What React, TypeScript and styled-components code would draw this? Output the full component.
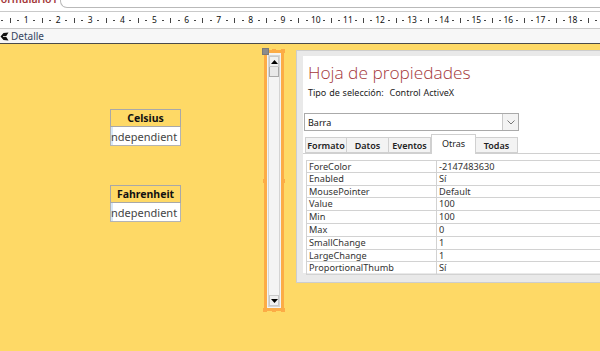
import React from "react";
import styled, { createGlobalStyle } from "styled-components";

const Global = createGlobalStyle`
  html, body { margin: 0; padding: 0; background: #ffffff; }
  body { font-family: "Noto Sans", "Open Sans", sans-serif; overflow: hidden; }
  * { box-sizing: border-box; }
`;

const Page = styled.div`
  width: 600px;
  height: 351px;
  display: flex;
  flex-direction: column;
  overflow: hidden;
`;

/* ---------- top document tab strip ---------- */
const TabStrip = styled.div`
  height: 11px;
  display: flex;
  background: #ffffff;
`;
const DocTab = styled.div`
  width: 60px;
  overflow: hidden;
`;
const DocTabTitle = styled.span`
  display: block;
  margin-top: -7px;
  margin-left: -5px;
  font-size: 10.5px;
  line-height: 12px;
  font-weight: 600;
  color: #a4373a;
  white-space: nowrap;
`;
const TabRest = styled.div`
  flex: 1;
  height: 8px;
  border-left: 1px solid #b9b9b9;
  border-bottom: 1px solid #b9b9b9;
  border-bottom-left-radius: 7px;
`;

/* ---------- ruler ---------- */
const Ruler = styled.div`
  height: 18px;
  border-top: 1px solid #c9c9c9;
  border-bottom: 1px solid #c9c9c9;
  background: #ffffff;
  display: flex;
  align-items: center;
  overflow: hidden;
`;
const RulerTrack = styled.div`
  display: flex;
  margin-left: -10px;
`;
const RulerUnit = styled.div`
  width: 32.1px;
  flex: none;
  display: grid;
  grid-template-columns: repeat(4, 1fr);
  align-items: center;
  justify-items: center;
  height: 16px;
`;
const RulerNum = styled.span`
  font-size: 8.5px;
  line-height: 10px;
  color: #111;
`;
const RulerDot = styled.span`
  width: 2px;
  height: 1px;
  background: #444;
`;
const RulerTick = styled.span`
  width: 1px;
  height: 5px;
  background: #444;
`;

/* ---------- section bar ---------- */
const SectionBar = styled.div`
  height: 15px;
  background: #f7f7f7;
  border-bottom: 1px solid #4a4a4a;
  display: flex;
  align-items: center;
  gap: 2px;
`;
const SectionLabel = styled.span`
  font-size: 10px;
  line-height: 12px;
  color: #354562;
`;

/* ---------- form canvas ---------- */
const FormCanvas = styled.div`
  flex: 1;
  background: #fed966;
  position: relative;
`;

const FieldGroup = styled.div<{ $top: number }>`
  position: absolute;
  left: 110px;
  top: ${(p) => p.$top}px;
  width: 71px;
  display: flex;
  flex-direction: column;
`;
const FieldLabel = styled.div`
  height: 18px;
  border: 1px solid #a8a8a8;
  display: flex;
  align-items: center;
  justify-content: center;
  font-size: 10.5px;
  font-weight: 700;
  color: #111;
`;
const FieldBox = styled.div`
  height: 19px;
  border: 1px solid #b4b4b4;
  border-top: none;
  background: #ffffff;
  display: flex;
  align-items: center;
  overflow: hidden;
  white-space: nowrap;
  font-size: 11px;
  color: #444;
  box-shadow: inset 2px 0 0 #d6e7f7;
`;

/* ---------- scrollbar control ---------- */
const ScrollSelection = styled.div`
  position: absolute;
  left: 264px;
  top: 6px;
  width: 20px;
  height: 261px;
  border: 3px solid #fcac46;
  background: #f3f3f3;
  display: flex;
  flex-direction: column;
`;
const ScrollTrack = styled.div`
  flex: 1;
  margin: 2px 1px 1px 1px;
  border: 1px solid #d4d4d4;
  background: #f4f4f4;
  display: flex;
  flex-direction: column;
`;
const ScrollButton = styled.div`
  height: 11px;
  background: #f0f0f0;
  border: 1px solid #c8c8c8;
  display: flex;
  align-items: center;
  justify-content: center;
`;
const ScrollThumb = styled.div`
  height: 10px;
  background: #e9e9e9;
  border: 1px solid #a9a9a9;
  border-top: none;
`;
const ScrollSpacer = styled.div`
  flex: 1;
`;
const Handle = styled.span<{ $x: number; $y: number }>`
  position: absolute;
  left: ${(p) => p.$x}px;
  top: ${(p) => p.$y}px;
  width: 4px;
  height: 4px;
  background: #fcac46;
`;
const MoveHandle = styled.span`
  position: absolute;
  left: 262px;
  top: 4px;
  width: 7px;
  height: 7px;
  background: #8c8c8c;
  border: 1px solid #7a7a7a;
`;

/* ---------- property sheet ---------- */
const PropertySheet = styled.div`
  position: absolute;
  left: 296px;
  top: 6px;
  width: 320px;
  height: 233px;
  background: #e9e9e9;
  border: 1px solid #cdcdcd;
  padding: 5px 0 9px 6px;
  display: flex;
`;
const SheetBody = styled.div`
  flex: 1;
  background: #ffffff;
  display: flex;
  flex-direction: column;
`;
const SheetTitle = styled.div`
  padding: 5px 0 0 5px;
  font-family: "Open Sans", "Noto Sans", sans-serif;
  font-weight: 300;
  font-size: 17.3px;
  line-height: 24px;
  color: #a4373a;
`;
const SheetSubtitle = styled.div`
  padding: 2px 0 0 5px;
  font-size: 9px;
  line-height: 12px;
  color: #222;
  word-spacing: 0.5px;
`;
const Select = styled.div`
  margin: 14px 0 0 1px;
  width: 215px;
  height: 18px;
  border: 1px solid #aaaaaa;
  display: flex;
  align-items: center;
  justify-content: space-between;
  padding-left: 3px;
`;
const SelectValue = styled.span`
  font-size: 9px;
  color: #111;
`;
const SelectButton = styled.div`
  width: 16px;
  height: 16px;
  border-left: 1px solid #c9c9c9;
  background: #f3f3f3;
  display: flex;
  align-items: center;
  justify-content: center;
`;
const TabRow = styled.div`
  margin-top: 3px;
  padding-left: 2px;
  display: flex;
  align-items: flex-end;
  border-bottom: 1px solid #d0d0d0;
  height: 20px;
`;
const SheetTab = styled.div<{ $active?: boolean }>`
  width: ${(p) => (p.$active ? 45 : 42)}px;
  height: ${(p) => (p.$active ? 20 : 16)}px;
  margin-bottom: ${(p) => (p.$active ? -1 : 0)}px;
  background: ${(p) => (p.$active ? "#ffffff" : "#f3f3f3")};
  border: 1px solid #d0d0d0;
  border-bottom: ${(p) => (p.$active ? "none" : "1px solid #d0d0d0")};
  border-left: ${(p) => (p.$active ? "1px solid #d0d0d0" : "none")};
  display: flex;
  align-items: ${(p) => (p.$active ? "flex-start" : "center")};
  justify-content: center;
  padding-top: ${(p) => (p.$active ? 2 : 0)}px;
  font-size: 9px;
  font-weight: ${(p) => (p.$active ? 400 : 600)};
  color: #222;
  &:first-child { border-left: 1px solid #d0d0d0; }
`;
const PropTable = styled.div`
  margin: 6px 0 0 3px;
  display: flex;
  flex-direction: column;
`;
const PropRow = styled.div`
  height: 12.8px;
  display: grid;
  grid-template-columns: 131px 1fr;
  border-bottom: 1px solid #d2d2d2;
  &:first-child { border-top: 1px solid #d2d2d2; }
`;
const PropCell = styled.div<{ $first?: boolean }>`
  font-size: 9.2px;
  line-height: 11px;
  color: #333;
  padding-left: 2px;
  border-left: ${(p) => (p.$first ? "1px solid #d2d2d2" : "none")};
  border-right: ${(p) => (p.$first ? "1px solid #d2d2d2" : "none")};
  white-space: nowrap;
  overflow: hidden;
`;

const props: [string, string][] = [
  ["ForeColor", "-2147483630"],
  ["Enabled", "Sí"],
  ["MousePointer", "Default"],
  ["Value", "100"],
  ["Min", "100"],
  ["Max", "0"],
  ["SmallChange", "1"],
  ["LargeChange", "1"],
  ["ProportionalThumb", "Sí"],
];

const tabs = ["Formato", "Datos", "Eventos", "Otras", "Todas"];

export default function App() {
  const units = Array.from({ length: 20 }, (_, i) => i);
  return (
    <>
      <Global />
      <Page>
        <TabStrip>
          <DocTab>
            <DocTabTitle>Formulario1</DocTabTitle>
          </DocTab>
          <TabRest />
        </TabStrip>

        <Ruler>
          <RulerTrack>
            {units.map((u) => (
              <RulerUnit key={u}>
                <RulerNum>{u === 0 || u > 18 ? "" : u}</RulerNum>
                <RulerDot />
                <RulerTick />
                <RulerDot />
              </RulerUnit>
            ))}
          </RulerTrack>
        </Ruler>

        <SectionBar>
          <svg width="9" height="9" viewBox="0 0 9 9">
            <path d="M8.5 0.5 L3.5 1 L0.5 4.5 L3.5 8 L8.5 8.5 L6 4.5 Z" fill="#111" />
            <path d="M3 4.5 L7 4.5" stroke="#f7f7f7" strokeWidth="0.8" />
          </svg>
          <SectionLabel>Detalle</SectionLabel>
        </SectionBar>

        <FormCanvas>
          <FieldGroup $top={65}>
            <FieldLabel>Celsius</FieldLabel>
            <FieldBox>ndependient</FieldBox>
          </FieldGroup>
          <FieldGroup $top={141}>
            <FieldLabel>Fahrenheit</FieldLabel>
            <FieldBox>ndependient</FieldBox>
          </FieldGroup>

          <ScrollSelection>
            <ScrollTrack>
              <ScrollButton>
                <svg width="7" height="4" viewBox="0 0 7 4">
                  <path d="M3.5 0 L7 4 L0 4 Z" fill="#000" />
                </svg>
              </ScrollButton>
              <ScrollThumb />
              <ScrollSpacer />
              <ScrollButton>
                <svg width="7" height="4" viewBox="0 0 7 4">
                  <path d="M0 0 L7 0 L3.5 4 Z" fill="#000" />
                </svg>
              </ScrollButton>
            </ScrollTrack>
          </ScrollSelection>
          <Handle $x={272} $y={5} />
          <Handle $x={281} $y={5} />
          <Handle $x={263} $y={135} />
          <Handle $x={281} $y={135} />
          <Handle $x={263} $y={264} />
          <Handle $x={272} $y={264} />
          <Handle $x={281} $y={264} />
          <MoveHandle />

          <PropertySheet>
            <SheetBody>
              <SheetTitle>Hoja de propiedades</SheetTitle>
              <SheetSubtitle>Tipo de selección:&nbsp; Control ActiveX</SheetSubtitle>
              <Select>
                <SelectValue>Barra</SelectValue>
                <SelectButton>
                  <svg width="8" height="5" viewBox="0 0 8 5">
                    <path d="M0.5 0.5 L4 4 L7.5 0.5" stroke="#777" fill="none" strokeWidth="1" />
                  </svg>
                </SelectButton>
              </Select>
              <TabRow>
                {tabs.map((t) => (
                  <SheetTab key={t} $active={t === "Otras"}>
                    {t}
                  </SheetTab>
                ))}
              </TabRow>
              <PropTable>
                {props.map(([k, v]) => (
                  <PropRow key={k}>
                    <PropCell $first>{k}</PropCell>
                    <PropCell>{v}</PropCell>
                  </PropRow>
                ))}
              </PropTable>
            </SheetBody>
          </PropertySheet>
        </FormCanvas>
      </Page>
    </>
  );
}
